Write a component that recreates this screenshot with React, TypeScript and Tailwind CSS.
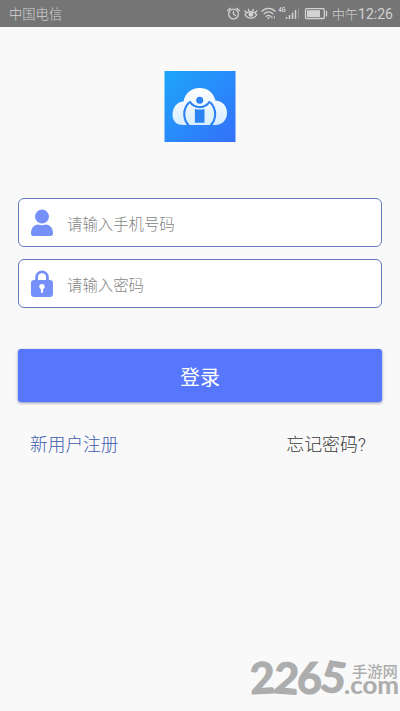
import type { ReactNode } from "react";

const fields = [
  { name: "phone", type: "tel", placeholder: "请输入手机号码", icon: <UserIcon /> },
  { name: "password", type: "password", placeholder: "请输入密码", icon: <LockIcon /> },
];

function UserIcon() {
  return (
    <svg width="24" height="28" viewBox="0 0 24 28" fill="#7590f8">
      <circle cx="12" cy="7.6" r="7" />
      <path d="M1 24.500C1 19 4 15.800 8.200 15.600c1.200.5 2.400.7 3.800.7s2.600-.2 3.800-.7C20 15.800 23 19 23 24.500c0 1.600-.8 2.500-2.300 2.500H3.300C1.800 27 1 26.100 1 24.500Z" />
    </svg>
  );
}

function LockIcon() {
  return (
    <svg width="24" height="28" viewBox="0 0 24 28">
      <path d="M6.600 12V7.200a5.400 5.400 0 0 1 10.800 0V12" fill="none" stroke="#7590f8" strokeWidth="2.800" />
      <rect x="1" y="10" width="22" height="17" rx="3.200" fill="#7590f8" />
      <circle cx="12" cy="16.600" r="2.700" fill="white" />
      <path d="M12 17v5" stroke="white" strokeWidth="2.200" strokeLinecap="round" />
    </svg>
  );
}

function StatusIcons() {
  return (
    <svg width="107" height="27" viewBox="0 0 107 27" fill="none" stroke="#d2d2d2" strokeWidth="1.300" strokeLinecap="round">
      {/* alarm */}
      <circle cx="8.500" cy="14" r="4.900" />
      <path d="M8.500 11.500V14l2 1.500M2.600 10.500l2.600-2.200M14.400 10.500l-2.600-2.200" />
      {/* eye */}
      <path d="M20 14.800c2.500-4.200 9.200-4.200 11.700 0-2.500 4.500-9.200 4.500-11.700 0Z" />
      <path d="M19.800 11l1.700 1.400M23.400 9.300l.6 1.500M28.300 9.300l-.6 1.500M31.900 11l-1.700 1.400" />
      <circle cx="25.900" cy="14.400" r="2.400" fill="#d2d2d2" stroke="none" />
      {/* wifi */}
      <path d="M37 11.300c3.600-3.900 9.500-3.900 13.100 0M39.100 13.900c2.500-2.600 6.300-2.600 8.800 0M41.200 16.400c1.300-1.300 3.200-1.300 4.500 0" />
      <circle cx="43.500" cy="18" r="1" fill="#d2d2d2" stroke="none" />
      <path d="M46.900 18.300v-2M49.300 16.300v2" strokeWidth=".9" />
      {/* signal */}
      <path d="M61.500 19v-2M64.500 19v-4M67.500 19v-6.500M70.500 19V10" strokeWidth="1.500" strokeLinecap="butt" />
      <path d="M73.500 19V8.500" stroke="#949494" strokeWidth="1" />
      <text x="53.500" y="12.300" fill="#d2d2d2" stroke="none" fontSize="6.500" fontWeight="700" textLength="7" lengthAdjust="spacingAndGlyphs" fontFamily="Roboto, sans-serif">4G</text>
      {/* battery */}
      <rect x="80.500" y="8.700" width="18.800" height="9.800" rx="1" />
      <path d="M82 10.200h13v6.800H82z" fill="#d2d2d2" stroke="none" />
      <path d="M101.500 11.500v4.200" strokeWidth="1.400" />
    </svg>
  );
}

function Logo() {
  return (
    <svg width="72" height="72" viewBox="0 0 72 72">
      <defs>
        <linearGradient id="tile" x1="0" y1="0" x2="1" y2="1">
          <stop offset="0" stopColor="#1ca6fa" />
          <stop offset="1" stopColor="#3470fa" />
        </linearGradient>
        <linearGradient id="cloud" x1="0" y1="0" x2="0" y2="1">
          <stop offset="0" stopColor="#fff" />
          <stop offset="1" stopColor="#d9edff" />
        </linearGradient>
      </defs>
      <rect x=".5" width="71" height="71" fill="url(#tile)" />
      <path
        d="M19 54C12.500 54 8.500 50 8.500 44c0-8 5-13.500 11-13.500C21 22.500 27 17 35.500 17c8 0 14 4.500 16 12.500 7.500.5 11.500 6 11.500 12.500 0 7-5 12-11.500 12Z"
        fill="url(#cloud)"
      />
      <circle cx="35.700" cy="29.300" r="3.500" fill="#2b83f4" />
      <g fill="none" stroke="#2b83f4" strokeWidth="2.100">
        <path d="M25.500 30.300c3 4.800 6.500 5.900 10.200 5.900s7.200-1.100 10.200-5.900" />
        <path d="M25 31.500c-6.300 6.500-6.300 16.500-.2 23M46.400 31.500c6.300 6.500 6.300 16.500.2 23" />
      </g>
      <path d="M30.900 38c3.200.8 6.400.8 9.600 0v13.800h-9.600Z" fill="#2b83f4" />
    </svg>
  );
}

function Field({ icon, ...input }: { icon: ReactNode; name: string; type: string; placeholder: string }) {
  return (
    <label className="flex h-[49px] items-center rounded-[6px] border border-[#647cba] bg-white pl-[11px]">
      {icon}
      <input
        {...input}
        className="mt-[6px] ml-[13px] w-64 bg-transparent text-[15.400px] font-light outline-none placeholder:text-[#848484]"
      />
    </label>
  );
}

function Watermark() {
  return (
    <div className="absolute right-0 bottom-0 h-[70px] w-[160px] text-[#adadad]">
      <svg width="160" height="70" viewBox="-10 -12 160 70" fill="currentColor" stroke="currentColor" strokeLinejoin="round" fontWeight="700">
        <g fontFamily="Lato, sans-serif" fontSize="43" strokeWidth="1.200">
          <text x="0" y="40.500" transform="rotate(-3 12 26)">2</text>
          <text x="24" y="40.500" transform="rotate(4 36 26)">2</text>
          <text x="47" y="40.500">6</text>
          <text x="71" y="39.500" transform="rotate(10 83 26)">5</text>
        </g>
        <text x="102" y="23.500" fontSize="15.300" stroke="none" fontWeight="500" fontFamily="Noto Sans CJK SC, sans-serif">手游网</text>
        <text x="94" y="40.800" fontSize="24" strokeWidth=".2" textLength="55" lengthAdjust="spacingAndGlyphs" fontFamily="Lato, sans-serif">.com</text>
      </svg>
    </div>
  );
}

export default function App() {
  return (
    <div className="relative h-[711px] w-[400px] overflow-hidden bg-[#f9f9f9] font-['Roboto','Noto_Sans_CJK_SC',sans-serif]">
      <header className="flex h-[26.500px] items-center bg-[#757575] pl-[9px] text-[13.300px] leading-none text-[#d2d2d2]">
        <span className="pt-[3px] font-light">中国电信</span>
        <div className="ml-auto flex h-[27px] items-center">
          <StatusIcons />
          <span className="w-[68px] pt-[2px] text-[14px] whitespace-nowrap">
            <span className="text-[13px] font-light">中午</span>12:26
          </span>
        </div>
      </header>

      <main className="px-[18px]">
        <div className="mt-[44.500px] flex justify-center">
          <Logo />
        </div>

        <form className="mt-[55px]">
          <div className="flex flex-col gap-3">
            {fields.map((field) => (
              <Field key={field.name} {...field} />
            ))}
          </div>
          <button
            type="button"
            className="mt-[41px] flex h-[53px] w-full items-center justify-center rounded-[3px] bg-[#5677fc] pt-[4px] text-[20px] text-white shadow-[0_1px_3px_rgba(60,70,130,0.6)]"
          >
            登录
          </button>
        </form>

        <div className="mt-[30px] flex justify-between pr-4 pl-3 text-[17.700px] leading-[26px] font-light">
          <a className="text-[#3f5cae]">新用户注册</a>
          <a className="text-[17.900px] text-[#3c3c3c]">忘记密码?</a>
        </div>
      </main>

      <Watermark />
    </div>
  );
}
